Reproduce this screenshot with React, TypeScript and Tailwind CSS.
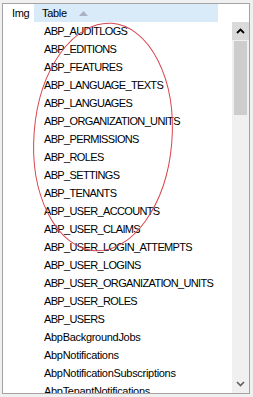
import React from 'react'

const tables = [
    'ABP_AUDITLOGS',
    'ABP_EDITIONS',
    'ABP_FEATURES',
    'ABP_LANGUAGE_TEXTS',
    'ABP_LANGUAGES',
    'ABP_ORGANIZATION_UNITS',
    'ABP_PERMISSIONS',
    'ABP_ROLES',
    'ABP_SETTINGS',
    'ABP_TENANTS',
    'ABP_USER_ACCOUNTS',
    'ABP_USER_CLAIMS',
    'ABP_USER_LOGIN_ATTEMPTS',
    'ABP_USER_LOGINS',
    'ABP_USER_ORGANIZATION_UNITS',
    'ABP_USER_ROLES',
    'ABP_USERS',
    'AbpBackgroundJobs',
    'AbpNotifications',
    'AbpNotificationSubscriptions',
    'AbpTenantNotifications',
]

export default function App() {
    return (
        <div className="relative w-[253px] h-[397px] overflow-hidden bg-[#f0f0f0] text-[11px] tracking-[-0.3px] text-black" style={{ fontFamily: '"Liberation Sans", Arial, sans-serif' }}>
            <div className="h-[3px] bg-[#f0f0f0]" />
            <div className="ml-[2px] w-[248px] h-[391px] border border-[#a3a3a3] bg-white flex flex-col">
                {/* Header */}
                <div className="flex h-[18px] shrink-0 items-center">
                    <div className="w-[31px] h-full flex items-center pl-[9px] bg-white">Img</div>
                    <div className="w-[184px] h-full flex items-center pl-[8px] bg-[#d9ebf9]">
                        <span>Table</span>
                        <svg width="9" height="5" viewBox="0 0 9 5" className="ml-[12px]">
                            <path d="M0 5 L4.5 0 L9 5 Z" fill="#a9b2c2" />
                        </svg>
                    </div>
                    <div className="flex-1" />
                </div>

                {/* Body */}
                <div className="flex flex-1 min-h-0">
                    <div className="flex-1 overflow-hidden">
                        {tables.map(t => (
                            <div
                                key={t}
                                className={`h-[18px] flex items-center pl-[41px] whitespace-nowrap ${t.startsWith('ABP_') ? 'tracking-[-0.65px]' : ''}`}
                            >
                                {t}
                            </div>
                        ))}
                    </div>

                    {/* Scrollbar */}
                    <div className="w-[17px] bg-[#f0f0f0] flex flex-col">
                        <div className="h-[18px] bg-[#dadada] flex items-center justify-center">
                            <svg width="9" height="6" viewBox="0 0 9 6">
                                <path d="M1 5 L4.5 1.5 L8 5" stroke="#000" strokeWidth="1.8" fill="none" />
                            </svg>
                        </div>
                        <div className="mx-[2px] mt-[1px] h-[74px] bg-[#cdcdcd]" />
                        <div className="flex-1" />
                        <div className="h-[18px] flex items-center justify-center">
                            <svg width="9" height="6" viewBox="0 0 9 6">
                                <path d="M1 1 L4.5 4.5 L8 1" stroke="#606060" strokeWidth="1.6" fill="none" />
                            </svg>
                        </div>
                    </div>
                </div>
            </div>

            {/* Red hand-drawn annotation ellipse */}
            <svg className="absolute left-0 top-0 pointer-events-none" width="253" height="397">
                <ellipse cx="103" cy="137" rx="69" ry="114" transform="rotate(4.5 103 137)" fill="none" stroke="#d8464f" strokeWidth="1" />
            </svg>
        </div>
    )
}
